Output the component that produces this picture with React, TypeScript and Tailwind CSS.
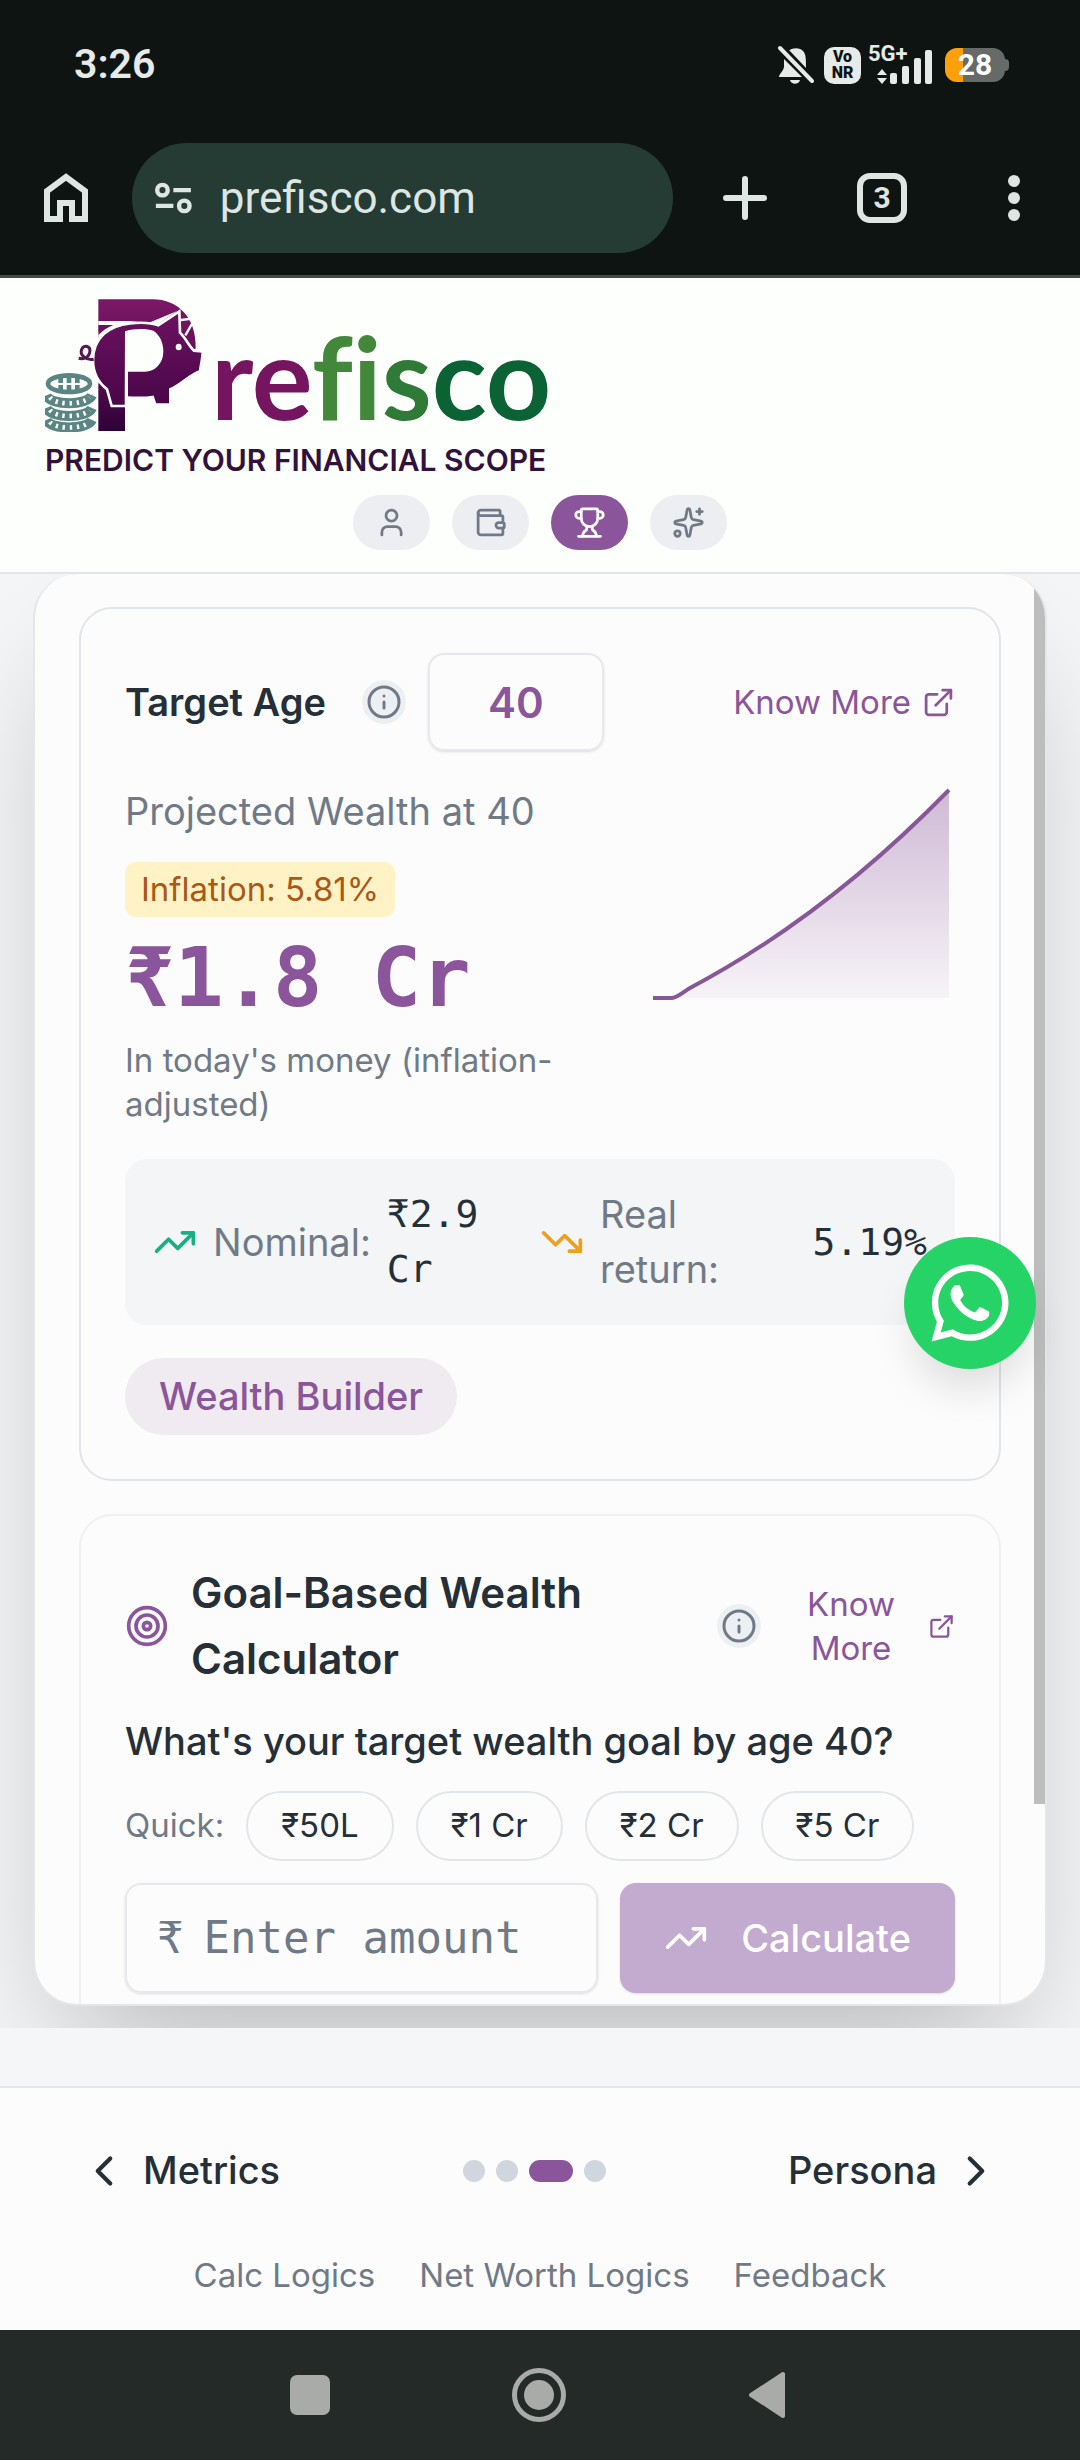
import React from "react";
import {
  ChevronLeft,
  ChevronRight,
  ExternalLink,
  Info,
  Sparkles,
  Target,
  TrendingDown,
  TrendingUp,
  Trophy,
  User,
  Wallet,
} from "lucide-react";
import { FaWhatsapp } from "react-icons/fa";

const mono = "font-['DejaVu_Sans_Mono','Liberation_Mono',monospace]";

function StatusBar() {
  return (
    <div className="flex h-[130px] items-center pr-[71px] pl-[74px] text-[#e6eae8]">
      <time className="font-['Roboto',sans-serif] text-[41px] font-semibold">3:26</time>
      <div className="ml-auto flex items-center">
        <svg viewBox="0 0 36 40" className="h-10 w-9" fill="currentColor" aria-label="Muted">
          <path d="M12 5 C14 3 22 2 25 6 C28 9 28 14 28 23 L11 5Z M6 14 L24 32 H1 C1 29 5 27 6 22Z M12 35 H22 C21 40 13 40 12 35Z" />
          <path d="M2 3 L34 36" stroke="currentColor" strokeWidth="4" strokeLinecap="round" />
        </svg>
        <span className="ml-[10px] grid h-[37px] w-[37px] place-content-center rounded-[10px] bg-[#e6eae8] text-center font-['Roboto',sans-serif] text-[16px] leading-4 font-black text-[#0e1412]">
          <span>Vo</span>
          <span>NR</span>
        </span>
        <div className="ml-[7px] flex h-[40px] w-[64px] items-start font-['Roboto',sans-serif] text-[22px] leading-[18px] font-bold">
          <span className="w-[42px] shrink-0">5G+</span>
          <svg viewBox="0 0 56 36" className="-ml-[34px] h-9 w-14 shrink-0 self-end" fill="currentColor" aria-hidden="true">
            <path d="M6 20 L11 26 H1Z M6 35 L11 29 H1Z" />
            <rect x="14" y="24" width="7" height="11" rx="2" />
            <rect x="26" y="17" width="7" height="18" rx="2" />
            <rect x="38" y="9" width="7" height="26" rx="2" />
            <rect x="49" y="1" width="7" height="34" rx="2" />
          </svg>
        </div>
        <div className="ml-[13px] flex items-center">
          <span className="grid h-[34px] w-[60px] place-content-center rounded-[12px] bg-linear-to-r from-[#ff9f0a] from-30% to-[#666a69] to-30% font-['Roboto',sans-serif] text-[30px] leading-8 font-bold text-white">
            28
          </span>
          <span className="h-3 w-1 rounded-r-full bg-[#666a69]" />
        </div>
      </div>
    </div>
  );
}

function BrowserBar() {
  return (
    <div className="flex h-[145px] items-center pr-[60px] pb-[9px] pl-[44px] text-[#dde6e2]">
      <button aria-label="Home">
        <svg viewBox="0 0 44 50" className="h-[50px] w-11" fill="none" stroke="currentColor" strokeWidth="6">
          <path d="M3 46 V18 L22 4 L41 18 V46 H28 V30 H16 V46Z" />
        </svg>
      </button>
      <div className="ml-11 flex h-[110px] flex-1 items-center rounded-full bg-[#243c34] pl-[23px]">
        <svg viewBox="0 0 42 36" className="h-9 w-[42px]" fill="none" stroke="currentColor" strokeWidth="5" aria-hidden="true">
          <circle cx="8.500" cy="9" r="6" />
          <circle cx="33.500" cy="27" r="6" />
          <path d="M21 9 H41 M1 27 H21" />
        </svg>
        <input
          aria-label="Address"
          defaultValue="prefisco.com"
          className="ml-7 w-full min-w-0 bg-transparent font-['Roboto',sans-serif] text-[44px] outline-none"
        />
      </div>
      <button aria-label="New tab" className="ml-[50px]">
        <svg viewBox="0 0 44 44" className="size-11" stroke="currentColor" strokeWidth="6" strokeLinecap="round">
          <path d="M22 3 V41 M3 22 H41" />
        </svg>
      </button>
      <button
        aria-label="3 open tabs"
        className="ml-[90px] grid size-[50px] place-content-center rounded-[13px] border-[6px] border-current font-['Roboto',sans-serif] text-[30px] leading-8 font-bold"
      >
        3
      </button>
      <button aria-label="Menu" className="ml-[101px] grid gap-[5px]">
        <span className="size-3 rounded-full bg-current" />
        <span className="size-3 rounded-full bg-current" />
        <span className="size-3 rounded-full bg-current" />
      </button>
    </div>
  );
}

function PigMark() {
  return (
    <svg viewBox="45 35 480 405" className="h-[135px] w-[160px]" aria-hidden="true">
      <defs>
        <linearGradient id="pTop" x1="0" y1="0" x2="0" y2="1">
          <stop offset="0" stopColor="#7c1866" />
          <stop offset="0.5" stopColor="#5f0d56" />
          <stop offset="1" stopColor="#2e0238" />
        </linearGradient>
        <linearGradient id="pigBody" x1="0" y1="0" x2="0" y2="1">
          <stop offset="0" stopColor="#6d1260" />
          <stop offset="1" stopColor="#480648" />
        </linearGradient>
      </defs>
      <path d="M205 42 H368 C445 42 500 98 497 190 L400 200 L285 150 V437 H205Z" fill="url(#pTop)" />
      <path d="M205 107 H300 L385 116 L440 78 L290 140 L205 190Z" fill="#fdfffd" />
      <path d="M205 119 H250 C232 126 218 136 205 150Z" fill="#6a115e" />
      <path d="M188 150 L205 140 V296 L180 280Z" fill="#fdfffd" />
      <path
        d="M245 362 L231 312 C205 292 189 262 189 225 C189 155 240 120 300 114 C340 110 365 112 385 120 L448 78 L450 142 C468 160 480 186 492 196 L518 198 C518 222 512 240 510 258 C480 268 450 300 421 312 V358 H376 L368 335 C340 340 310 337 293 337 V362Z"
        fill="url(#pigBody)"
        stroke="#fdfffd"
        strokeWidth="8"
      />
      <path d="M285 138 C310 129 350 129 370 136 C390 150 400 172 400 198 C400 235 375 259 345 259 H294 V366 H284Z" fill="#fdfffd" />
      <path d="M452 104 L488 100 M488 112 L466 150" stroke="#fdfffd" strokeWidth="7" fill="none" />
      <ellipse cx="446" cy="185" rx="9" ry="10" fill="#fdfffd" />
      <path d="M191 222 C168 226 148 208 155 192 C162 176 184 182 179 202 C175 218 160 222 146 219" stroke="#5a1450" strokeWidth="9" fill="none" />
      <g fill="none" stroke="#5a8583">
        <ellipse cx="117" cy="295" rx="63" ry="25" strokeWidth="14" />
        <path d="M92 275 V316 M117 270 V320 M142 275 V316" strokeWidth="14" />
        <path d="M49 330 C62 362 172 362 186 330" strokeWidth="30" />
        <path d="M49 368 C62 400 172 400 186 368" strokeWidth="30" />
        <path d="M49 404 C62 434 172 434 186 404" strokeWidth="30" />
      </g>
      <g fill="none" stroke="#fdfffd">
        <path d="M68 296 H166" strokeWidth="6" />
        <path d="M60 336 C76 360 158 360 178 336" strokeWidth="14" strokeDasharray="7 14" />
        <path d="M60 374 C76 398 158 398 178 374" strokeWidth="14" strokeDasharray="7 14" />
        <path d="M60 410 C76 432 158 432 178 410" strokeWidth="14" strokeDasharray="7 14" />
      </g>
    </svg>
  );
}

const tabs = [
  { label: "Profile", Icon: User, active: false },
  { label: "Metrics", Icon: Wallet, active: false },
  { label: "Goals", Icon: Trophy, active: true },
  { label: "Persona", Icon: Sparkles, active: false },
];

function SiteHeader() {
  return (
    <header className="border-b-2 border-[#e1e4e8] bg-[#fdfffd] pt-[19px] pb-[22px]">
      <a href="#home" className="block pl-[45px]">
        <span className="flex h-[135px] items-end">
          <PigMark />
          <span className="ml-[6px] font-['Lato',sans-serif] text-[114px] leading-[112px] font-bold [font-variant-ligatures:none]">
            <span className="text-[#75145f]">re</span>
            <span className="text-[#43883a]">fi</span>
            <span className="text-[#2f7a36]">s</span>
            <span className="text-[#0b6234]">co</span>
          </span>
        </span>
        <span className="mt-3 block font-['Inter',sans-serif] text-[30px] leading-8 font-semibold text-[#32123c]">
          PREDICT YOUR FINANCIAL SCOPE
        </span>
      </a>
      <nav className="mt-[19px] flex justify-center gap-[22px]">
        {tabs.map(({ label, Icon, active }) => (
          <button
            key={label}
            aria-label={label}
            className={
              active
                ? "grid h-[55px] w-[77px] place-content-center rounded-full bg-[#8b559b] text-white"
                : "grid h-[55px] w-[77px] place-content-center rounded-full bg-[#edeef2] text-[#707a86]"
            }
          >
            <Icon size={33} />
          </button>
        ))}
      </nav>
    </header>
  );
}

function InfoButton() {
  return (
    <button aria-label="More information" className="grid size-11 shrink-0 place-content-center rounded-full bg-[#edf0f2] text-[#707a86]">
      <Info size={36} />
    </button>
  );
}

function WealthChart() {
  return (
    <svg viewBox="0 0 308 220" className="h-[220px] w-[308px] shrink-0" aria-label="Projected wealth">
      <defs>
        <linearGradient id="area" x1="0" y1="0" x2="0" y2="1">
          <stop offset="0" stopColor="#8b559b" stopOpacity="0.4" />
          <stop offset="1" stopColor="#8b559b" stopOpacity="0.05" />
        </linearGradient>
      </defs>
      <path d="M6 214 H24 C30 214 36 208 43 204 C130 158 218 92 302 6 V214Z" fill="url(#area)" />
      <path d="M6 214 H24 C30 214 36 208 43 204 C130 158 218 92 302 6" fill="none" stroke="#875896" strokeWidth="4" />
    </svg>
  );
}

function ProjectionCard() {
  return (
    <section className="rounded-[33px] border-2 border-[#e1e4e8] p-11">
      <div className="flex items-center">
        <label htmlFor="age" className="text-[38px] leading-[55px] font-semibold text-[#252f38]">
          Target Age
        </label>
        <div className="ml-9 flex items-center gap-[22px]">
          <InfoButton />
          <input
            id="age"
            defaultValue="40"
            className="h-[98px] w-[176px] rounded-[16px] border-2 border-[#e6e8eb] text-center text-[42px] font-semibold text-[#8b559b] shadow-sm"
          />
        </div>
        <a href="#projection" className="ml-auto flex items-center gap-[11px] text-[33px] leading-11 text-[#8b559b]">
          Know More <ExternalLink size={33} />
        </a>
      </div>
      <div className="mt-[33px] flex items-start justify-between">
        <div className="flex min-w-0 flex-1 flex-col items-start">
          <h2 className="text-[38px] leading-[55px] text-[#707a86]">Projected Wealth at 40</h2>
          <span className="mt-[23px] rounded-[11px] bg-[#fff3c5] px-4 text-[33px] leading-[55px] text-[#ab5716]">
            Inflation: 5.81%
          </span>
          <p className={`${mono} mt-[11px] text-[82px] leading-[99px] font-bold text-[#8b559b]`}>₹1.8 Cr</p>
          <p className="mt-[11px] text-[33px] leading-11 text-[#707a86]">In today's money (inflation-adjusted)</p>
        </div>
        <WealthChart />
      </div>
      <dl className="mt-[33px] grid grid-cols-2 rounded-[22px] bg-[#f4f5f7] p-7 text-[38px] leading-[55px]">
        <div className="flex items-center gap-4">
          <TrendingUp size={44} className="shrink-0 text-[#15b182]" />
          <dt className="text-[#707a86]">Nominal:</dt>
          <dd className={`${mono} text-[#252f38]`}>₹2.9 Cr</dd>
        </div>
        <div className="flex items-center gap-4">
          <TrendingDown size={44} className="shrink-0 text-[#efa019]" />
          <dt className="text-[#707a86]">Real return:</dt>
          <dd className={`${mono} text-[#252f38]`}>5.19%</dd>
        </div>
      </dl>
      <span className="mt-[33px] inline-block rounded-full bg-[#efebf1] px-[34px] align-top text-[38px] leading-[77px] font-medium text-[#8b559b]">
        Wealth Builder
      </span>
    </section>
  );
}

function GoalCard() {
  return (
    <section className="mt-[33px] rounded-[33px] border-2 border-[#eff0f2] p-11">
      <div className="flex items-center">
        <Target size={44} className="shrink-0 text-[#8b559b]" />
        <h2 className="ml-[22px] min-w-0 flex-1 text-[42px] leading-[66px] font-semibold text-[#252f38]">
          Goal-Based Wealth Calculator
        </h2>
        <div className="ml-11 flex items-center">
          <InfoButton />
          <a href="#goal" className="ml-11 flex items-center text-[33px] leading-11 text-[#8b559b]">
            <span className="w-[92px] text-center">Know More</span>
            <ExternalLink size={27} className="ml-[31px]" />
          </a>
        </div>
      </div>
      <label htmlFor="goal" className="mt-[22px] block text-[38px] leading-[55px] font-medium text-[#252f38]">
        What's your target wealth goal by age 40?
      </label>
      <div className="mt-[22px] flex items-center gap-[22px] text-[33px]">
        <span className="text-[#707a86]">Quick:</span>
        {["₹50L", "₹1 Cr", "₹2 Cr", "₹5 Cr"].map((amount) => (
          <button key={amount} className="h-[70px] rounded-full border-2 border-[#e3e6e9] px-[33px] text-[#252f38]">
            {amount}
          </button>
        ))}
      </div>
      <div className="mt-[22px] flex h-[110px] gap-[22px]">
        <div className={`${mono} flex min-w-0 flex-1 items-center rounded-[16px] border-2 border-[#e6e8eb] px-[30px] text-[44px] text-[#707a86] shadow-sm`}>
          <span aria-hidden="true">₹</span>
          <input id="goal" placeholder="Enter amount" className="ml-5 w-full min-w-0 bg-transparent outline-none placeholder:text-[#707a86]" />
        </div>
        <button className="flex items-center gap-[33px] rounded-[16px] bg-[#c3aacf] px-11 text-[38px] font-medium text-white shadow-sm">
          <TrendingUp size={44} />
          Calculate
        </button>
      </div>
    </section>
  );
}

function Footer() {
  return (
    <footer className="flex h-[244px] flex-col border-t-2 border-[#e1e4e8] bg-[#fcfcfc] text-[#252f38]">
      <div className="mt-[44px] flex h-[77px] items-center justify-between px-[79px] text-[38px] font-medium">
        <button className="flex items-center gap-[14px]">
          <ChevronLeft size={50} /> Metrics
        </button>
        <div className="flex gap-[11px]">
          <span className="size-[22px] rounded-full bg-[#d0d6dd]" />
          <span className="size-[22px] rounded-full bg-[#d0d6dd]" />
          <span className="h-[22px] w-11 rounded-full bg-[#8b559b]" />
          <span className="size-[22px] rounded-full bg-[#d0d6dd]" />
        </div>
        <button className="flex items-center gap-[14px]">
          Persona <ChevronRight size={50} />
        </button>
      </div>
      <nav className="mt-11 flex justify-center gap-11 text-[33px] leading-11 text-[#707a86]">
        <a href="#calc">Calc Logics</a>
        <a href="#net-worth">Net Worth Logics</a>
        <a href="#feedback">Feedback</a>
      </nav>
    </footer>
  );
}

function SystemNav() {
  return (
    <div className="flex h-[130px] shrink-0 items-center justify-center bg-[#242a28] pr-1 text-[#a8aba8]">
      <button aria-label="Recent apps" className="size-10 rounded-[7px] bg-current" />
      <button aria-label="Home screen" className="ml-[182px] grid size-[54px] place-content-center rounded-full border-[5px] border-current">
        <span className="size-[30px] rounded-full bg-current" />
      </button>
      <button aria-label="Back" className="ml-[182px]">
        <svg viewBox="0 0 38 48" className="h-12 w-[38px]" fill="currentColor" stroke="currentColor" strokeWidth="4" strokeLinejoin="round">
          <path d="M3 24 L35 3 V45Z" />
        </svg>
      </button>
    </div>
  );
}

export default function App() {
  return (
    <div className="relative flex h-screen flex-col bg-[#f5f6f8] font-['Inter',sans-serif]">
      <div className="border-b-[3px] border-[#444b48] bg-[#0e1412]">
        <StatusBar />
        <BrowserBar />
      </div>
      <SiteHeader />
      <main className="mb-[58px] min-h-0 flex-1 overflow-hidden px-[33px] pb-[22px]">
        <div className="relative h-full overflow-hidden rounded-[44px] border-2 border-t-0 border-[#e4e6e9] bg-[#fcfcfc] shadow-[0_69px_138px_-33px_rgba(0,0,0,0.25)]">
          <div className="h-full overflow-hidden px-11 pt-[33px]">
            <ProjectionCard />
            <GoalCard />
          </div>
          <span className="absolute top-0 right-0 h-[86%] w-[11px] bg-[#bdbdbd]" />
        </div>
      </main>
      <Footer />
      <SystemNav />
      <a
        href="#chat"
        aria-label="Chat on WhatsApp"
        className="absolute right-11 bottom-[1091px] grid size-[132px] place-content-center rounded-full bg-[#25d366] text-white shadow-[0_28px_42px_-8px_rgba(0,0,0,0.12)]"
      >
        <FaWhatsapp size={88} />
      </a>
    </div>
  );
}
